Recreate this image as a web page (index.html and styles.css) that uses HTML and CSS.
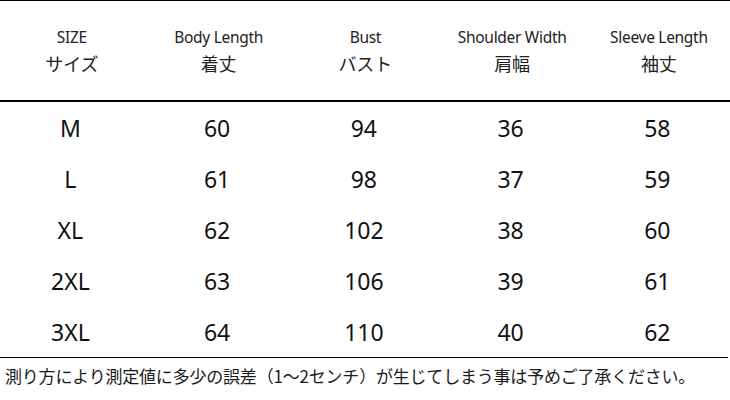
FILE: index.html
```html
<!DOCTYPE html>
<html lang="ja">
<head>
<meta charset="utf-8">
<link rel="stylesheet" href="styles.css">
</head>
<body>
<div class="page">
  <div class="head grid">
    <div class="hc"><span class="en">SIZE</span><span class="ja">サイズ</span></div>
    <div class="hc"><span class="en">Body Length</span><span class="ja">着丈</span></div>
    <div class="hc"><span class="en">Bust</span><span class="ja">バスト</span></div>
    <div class="hc"><span class="en">Shoulder Width</span><span class="ja">肩幅</span></div>
    <div class="hc"><span class="en">Sleeve Length</span><span class="ja">袖丈</span></div>
  </div>
  <div class="body">
    <div class="row grid"><div>M</div><div>60</div><div>94</div><div>36</div><div>58</div></div>
    <div class="row grid"><div>L</div><div>61</div><div>98</div><div>37</div><div>59</div></div>
    <div class="row grid"><div>XL</div><div>62</div><div>102</div><div>38</div><div>60</div></div>
    <div class="row grid"><div>2XL</div><div>63</div><div>106</div><div>39</div><div>61</div></div>
    <div class="row grid"><div>3XL</div><div>64</div><div>110</div><div>40</div><div>62</div></div>
  </div>
  <p class="note">測り方により測定値に多少の誤差（1〜2センチ）が生じてしまう事は予めご了承ください。</p>
</div>
</body>
</html>
```
FILE: styles.css
```css
html, body {
  margin: 0;
  padding: 0;
  background: #fff;
}
.page {
  width: 730px;
  height: 400px;
  overflow: hidden;
  font-family: "Noto Sans", "Noto Sans CJK JP", sans-serif;
  color: #1a1a1a;
}
.grid {
  display: grid;
  grid-template-columns: repeat(5, 146.75px);
  margin-left: -3px;
  text-align: center;
}
.head {
  border-top: 1px solid #000;
  border-bottom: 2px solid #000;
  height: 99px;
  align-content: center;
  margin-left: 0;
  width: 730px;
}
.head .hc {
  display: flex;
  flex-direction: column;
  align-items: center;
  margin-left: -3px;
}
.en {
  font-family: "Noto Sans", "Noto Sans CJK JP", sans-serif;
  font-size: 15.5px;
  font-weight: 400;
  line-height: 24px;
  letter-spacing: -0.3px;
  color: #222;
}
.ja {
  font-family: "Noto Sans CJK JP", sans-serif;
  font-size: 18px;
  line-height: 28px;
  color: #222;
}
.body {
  border-bottom: 1px solid #000;
  width: 728px;
}
.row {
  height: 51px;
  align-items: center;
  font-size: 23px;
  font-weight: 400;
  color: #111;
}
.note {
  margin: 0;
  padding: 6px 0 0 5px;
  font-family: "Noto Sans CJK JP", sans-serif;
  font-size: 17px;
  line-height: 24px;
  color: #1a1a1a;
  letter-spacing: -0.2px;
  white-space: nowrap;
}
```
